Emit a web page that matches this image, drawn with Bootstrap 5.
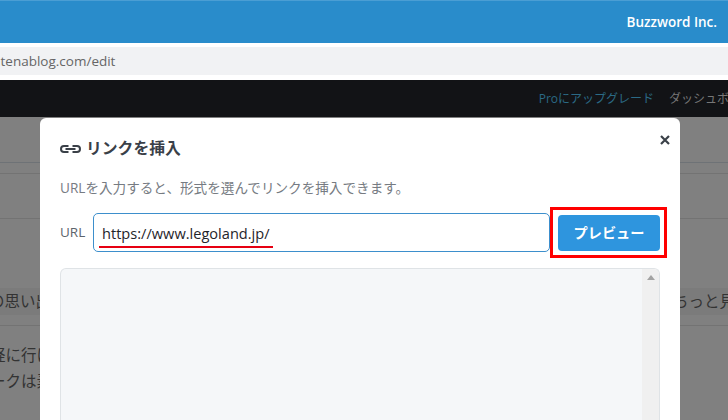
<!DOCTYPE html>
<html lang="ja">
<head>
<meta charset="UTF-8">
<title>リンクを挿入</title>
<link href="https://cdn.jsdelivr.net/npm/bootstrap@5.3.0/dist/css/bootstrap.min.css" rel="stylesheet">
<style>
html, body { height: 420px; overflow: hidden; }
body { font-family: "Open Sans", "Noto Sans CJK JP", sans-serif; color: #3a4048; background: #fff; position: relative; }
.top-strip { height: 43px; background: #298ccb; border-top: 1px solid #4a9ed4; color: #fff; font-size: 13.5px; font-weight: 600; padding-right: 11px; }
.addr-strip { height: 28px; margin-top: 4px; background: #f1f2f4; color: #666; font-size: 13.5px; white-space: nowrap; overflow: hidden; }
.addr-strip span { margin-left: -7px; }
.dark-strip { height: 37px; margin-top: 5px; background: #121316; font-size: 12px; white-space: nowrap; overflow: hidden; gap: 15px; }
.pro-link { color: #2b6a85; }
.dash-link { color: #777; width: 59px; overflow: hidden; }
.dim-area { height: 303px; background: #808080; overflow: hidden; color: #333; font-size: 15.5px; white-space: nowrap; }
.dim-line { height: 1px; background: #6e7276; margin-top: 45px; }
.soft-line { height: 1px; background: #737373; margin-top: 10px; }
.soft-line.gap-wide { margin-top: 44px; }
.band-row { height: 27px; margin-top: 69px; background: #7b7b7b; line-height: 27px; }
.band-row span:first-child { margin-left: -11px; }
.band-row span:last-child { margin-right: -7px; }
.text-rows { line-height: 26px; margin-top: 16px; }
.text-rows div { margin-left: -10px; }
.link-modal { position: absolute; left: 40px; top: 118px; width: 640px; height: 302px; background: #fff; border-radius: 6px 6px 0 0; padding: 20px 20px 0; overflow: hidden; }
.close-x { position: absolute; top: 16px; right: 9px; }
.modal-head { font-size: 15.8px; font-weight: 700; color: #3a4048; height: 22px; margin-bottom: 18px; gap: 5px; }
.modal-desc { font-size: 13.6px; color: #767b82; line-height: 20px; margin-bottom: 9px; }
.url-label { font-size: 13.5px; color: #5d646c; width: 33px; flex: none; margin-bottom: 1px; }
.url-field { width: 457px; height: 39px; flex: none; border: 1px solid #3d8fcc; border-radius: 5px; font-size: 14.6px; color: #1f252b; padding: 0 8px; line-height: 38px; position: relative; }
.red-under { position: absolute; left: 5px; top: 32px; width: 174px; height: 2px; background: #e60012; }
.red-box { border: 3px solid #f00; padding: 5px; height: 51px; flex: none; width: 117px; }
.preview-btn { width: 102px; height: 36px; padding: 0; border: 0; border-radius: 4px; background: #2e95de; color: #fff; font-size: 14.2px; font-weight: 600; display: block; }
.preview-pane { height: 152px; margin-top: 10px; width: 600px; background: #f5f7f9; border: 1px solid #dfe3e6; border-bottom: 0; border-radius: 6px 6px 0 0; overflow: hidden; }
.fake-scroll { width: 17px; background: #f0f0f0; }
.scroll-arrow { width: 0; height: 0; margin: 6px auto 0; border-left: 4px solid transparent; border-right: 4px solid transparent; border-bottom: 5px solid #a3a3a3; }
</style>
</head>
<body>
<div class="top-strip d-flex align-items-center justify-content-end">Buzzword Inc.</div>
<div class="addr-strip d-flex align-items-center"><span>atenablog.com/edit</span></div>
<div class="dark-strip d-flex align-items-center justify-content-end">
    <span class="pro-link">Proにアップグレード</span>
    <span class="dash-link">ダッシュボード</span>
</div>
<div class="dim-area">
    <div class="dim-line"></div>
    <div class="soft-line"></div>
    <div class="soft-line gap-wide"></div>
    <div class="band-row d-flex justify-content-between">
        <span>の思い出</span>
        <span>ちっと見</span>
    </div>
    <div class="soft-line"></div>
    <div class="text-rows">
        <div>経に行け</div>
        <div>ークは素</div>
    </div>
</div>

<div class="link-modal">
    <button type="button" class="close-x btn p-0 border-0 d-flex" aria-label="閉じる">
        <svg width="12" height="12" viewBox="0 0 12 12"><path d="M2 2l8 8M10 2l-8 8" stroke="#3a4048" stroke-width="2.2" fill="none"/></svg>
    </button>
    <div class="modal-head d-flex align-items-center">
        <svg width="21" height="8" viewBox="0 0 21 8" fill="none" stroke="#3a4048" stroke-width="2"><path d="M8.500 1H4a3 3 0 0 0 0 6h4.500M12.500 1H17a3 3 0 0 1 0 6h-4.500M5.500 4h10"/></svg>
        <span>リンクを挿入</span>
    </div>
    <p class="modal-desc">URLを入力すると、形式を選んでリンクを挿入できます。</p>
    <div class="d-flex align-items-center">
        <label class="url-label">URL</label>
        <div class="url-field">https://www.legoland.jp/<span class="red-under"></span></div>
        <div class="red-box"><button type="button" class="preview-btn">プレビュー</button></div>
    </div>
    <div class="preview-pane d-flex justify-content-end">
        <div class="fake-scroll"><div class="scroll-arrow"></div></div>
    </div>
</div>
<script src="https://cdn.jsdelivr.net/npm/bootstrap@5.3.0/dist/js/bootstrap.bundle.min.js"></script>
</body>
</html>
